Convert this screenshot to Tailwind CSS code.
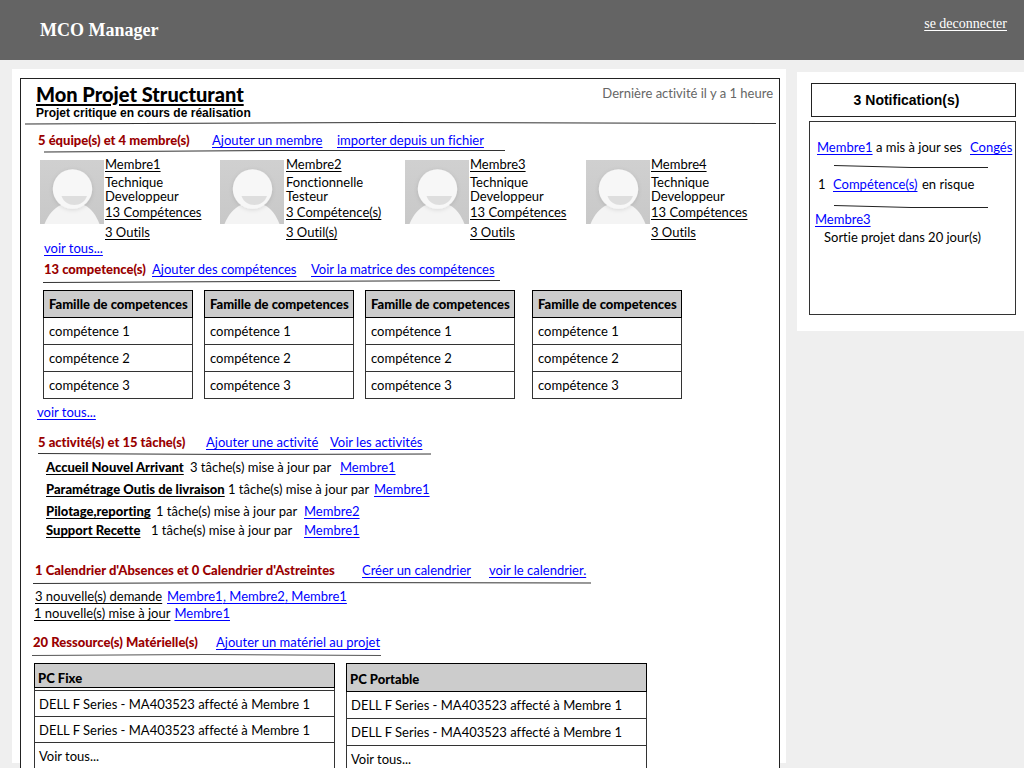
<!DOCTYPE html>
<html lang="fr">
<head>
<meta charset="utf-8">
<meta name="viewport" content="width=device-width, initial-scale=1">
<title>MCO Manager</title>
<script src="https://cdn.jsdelivr.net/npm/@tailwindcss/browser@4"></script>
</head>
<body class="flex h-screen flex-col overflow-hidden bg-[#efefef] font-['Comic_Sans_MS',Lato,sans-serif] text-[13px] leading-[18px] text-black [font-variant-ligatures:none] [&_a]:whitespace-nowrap [&_a]:underline [&_a]:underline-offset-2 [&_svg]:block">
<svg width="0" height="0" class="absolute" aria-hidden="true">
  <defs>
    <linearGradient id="bg" x1="0" y1="0" x2="0" y2="1"><stop offset="0" stop-color="#d0d0d0"/><stop offset="1" stop-color="#c8c8c8"/></linearGradient>
    <filter id="sh" x="-20%" y="-20%" width="140%" height="140%"><feDropShadow dx="0" dy="1" stdDeviation="2" flood-color="#000" flood-opacity=".12"/></filter>
    <symbol id="avatar" viewBox="0 0 64 64">
      <rect width="64" height="64" fill="url(#bg)"/>
      <path d="M4.500 64C8 55 14 48 21 45C28 43 37 43 44 45C51 48 56 55 59.500 64Z" fill="#f4f4f4"/>
      <circle cx="32.500" cy="29" r="19.700" fill="#f7f7f7" filter="url(#sh)"/>
      <path d="M21.500 36H47C43 48 25.500 48 21.500 36Z" fill="#dedede"/>
    </symbol>
  </defs>
</svg>
<header class="flex h-[60px] shrink-0 items-start justify-between bg-[#646464] pl-10 pr-[17px] font-['Liberation_Serif',serif] text-white">
  <h1 class="pt-[18px] text-[18px] font-bold leading-6">MCO Manager</h1>
  <a href="#" class="pt-[14px] text-[14px] leading-[20px]">se deconnecter</a>
</header>
<div class="flex min-h-0 flex-1 items-start gap-[11px] pl-3">
  <main class="mt-[9px] h-[calc(100vh-74px)] min-w-0 flex-1 bg-white pl-2 pr-[6px] pt-[9px]">
    <div class="min-h-[calc(100vh-70px)] border border-[#222] bg-white">
      <div class="flex h-[42px] justify-between pl-[15px] pr-[6px]">
        <div>
          <h2 class="pt-[3px] text-[20px] font-black leading-6"><a href="#">Mon Projet Structurant</a></h2>
          <p class="font-['Liberation_Sans',sans-serif] text-xs font-bold leading-[14px]">Projet critique en cours de réalisation</p>
        </div>
        <p class="pt-[5px] text-[#666]">Dernière activité il y a 1 heure</p>
      </div>
      <svg class="ml-1 h-1 w-[calc(100%-7px)]" viewBox="0 0 750 4" preserveAspectRatio="none"><path d="M0 3L360 1.500L750 2.500" fill="none" stroke="#333"/></svg>

      <section>
        <div class="flex pl-[17px] pt-[6px]">
          <h3 class="w-[174px] font-black text-[#900]">5 équipe(s) et 4 membre(s)</h3>
          <a href="#" class="w-[125px] text-[#00f]">Ajouter un membre</a>
          <a href="#" class="text-[#00f]">importer depuis un fichier</a>
        </div>
        <svg class="ml-[23px] h-1 w-[461px]" viewBox="0 0 461 4" preserveAspectRatio="none"><path d="M0 3L230 1.500L461 1.500" fill="none" stroke="#333"/></svg>
        <div class="flex pl-[19px] pt-[2px]">
          <article class="flex w-[180px]">
            <svg class="mt-[5px] size-16 shrink-0" role="img" aria-label="Membre1"><use href="#avatar"/></svg>
            <div class="flex flex-col items-start pl-px"><a href="#">Membre1</a><p class="pt-[2px] leading-[14px]">Technique<br>Developpeur</p><a href="#">13 Compétences</a><a href="#" class="pt-[3px] leading-4">3 Outils</a></div>
          </article>
          <article class="flex w-[185px]">
            <svg class="mt-[5px] size-16 shrink-0" role="img" aria-label="Membre2"><use href="#avatar"/></svg>
            <div class="flex flex-col items-start pl-[2px]"><a href="#">Membre2</a><p class="pt-[2px] leading-[14px]">Fonctionnelle<br>Testeur</p><a href="#">3 Compétence(s)</a><a href="#" class="pt-[3px] leading-4">3 Outil(s)</a></div>
          </article>
          <article class="flex w-[181px]">
            <svg class="mt-[5px] size-16 shrink-0" role="img" aria-label="Membre3"><use href="#avatar"/></svg>
            <div class="flex flex-col items-start pl-px"><a href="#">Membre3</a><p class="pt-[2px] leading-[14px]">Technique<br>Developpeur</p><a href="#">13 Compétences</a><a href="#" class="pt-[3px] leading-4">3 Outils</a></div>
          </article>
          <article class="flex">
            <svg class="mt-[5px] size-16 shrink-0" role="img" aria-label="Membre4"><use href="#avatar"/></svg>
            <div class="flex flex-col items-start pl-px"><a href="#">Membre4</a><p class="pt-[2px] leading-[14px]">Technique<br>Developpeur</p><a href="#">13 Compétences</a><a href="#" class="pt-[3px] leading-4">3 Outils</a></div>
          </article>
        </div>
        <p class="pl-[23px] leading-4"><a href="#" class="text-[#00f]">voir tous...</a></p>
      </section>

      <section>
        <div class="flex pl-[23px] pt-1">
          <h3 class="w-[108px] font-black text-[#900]">13 competence(s)</h3>
          <a href="#" class="w-[159px] text-[#00f]">Ajouter des compétences</a>
          <a href="#" class="text-[#00f]">Voir la matrice des compétences</a>
        </div>
        <svg class="ml-[22px] h-[6px] w-[457px]" viewBox="0 0 457 6" preserveAspectRatio="none"><path d="M0 4.500L220 3.500L457 2.500" fill="none" stroke="#333"/></svg>
        <div class="flex gap-[11px] pl-[22px] pt-[6px] [&_table]:w-[150px] [&_td]:h-[27px] [&_td]:border [&_td]:border-[#333] [&_td]:px-[5px] [&_th]:h-[27px] [&_th]:whitespace-nowrap [&_th]:border [&_th]:border-black [&_th]:bg-[#ccc] [&_th]:pl-[5px] [&_th]:text-left [&_th]:font-black">
          <table><thead><tr><th>Famille de competences</th></tr></thead><tbody><tr><td>compétence 1</td></tr><tr><td>compétence 2</td></tr><tr><td>compétence 3</td></tr></tbody></table>
          <table><thead><tr><th>Famille de competences</th></tr></thead><tbody><tr><td>compétence 1</td></tr><tr><td>compétence 2</td></tr><tr><td>compétence 3</td></tr></tbody></table>
          <table><thead><tr><th>Famille de competences</th></tr></thead><tbody><tr><td>compétence 1</td></tr><tr><td>compétence 2</td></tr><tr><td>compétence 3</td></tr></tbody></table>
          <table class="ml-[6px]"><thead><tr><th>Famille de competences</th></tr></thead><tbody><tr><td>compétence 1</td></tr><tr><td>compétence 2</td></tr><tr><td>compétence 3</td></tr></tbody></table>
        </div>
        <p class="pl-4 pt-1"><a href="#" class="text-[#00f]">voir tous...</a></p>
      </section>

      <section>
        <div class="flex pl-[17px] pt-3">
          <h3 class="w-[168px] font-black text-[#900]">5 activité(s) et 15 tâche(s)</h3>
          <a href="#" class="w-[124px] text-[#00f]">Ajouter une activité</a>
          <a href="#" class="text-[#00f]">Voir les activités</a>
        </div>
        <svg class="ml-[17px] h-[6px] w-[393px]" viewBox="0 0 393 6" preserveAspectRatio="none"><path d="M0 2.500L200 3.500L393 3" fill="none" stroke="#333"/></svg>
        <ul class="pl-[25px] pt-px [&_li]:flex">
          <li class="pb-1"><a href="#" class="w-[144px] font-black">Accueil Nouvel Arrivant</a><span class="w-[150px]">3 tâche(s) mise à jour par</span><a href="#" class="text-[#00f]">Membre1</a></li>
          <li class="pb-1"><a href="#" class="w-[182px] font-black">Paramétrage Outis de livraison</a><span class="w-[146px]">1 tâche(s) mise à jour par</span><a href="#" class="text-[#00f]">Membre1</a></li>
          <li class="pb-px"><a href="#" class="w-[110px] font-black">Pilotage,reporting</a><span class="w-[148px]">1 tâche(s) mise à jour par</span><a href="#" class="text-[#00f]">Membre2</a></li>
          <li><a href="#" class="w-[105px] font-black">Support Recette</a><span class="w-[153px]">1 tâche(s) mise à jour par</span><a href="#" class="text-[#00f]">Membre1</a></li>
        </ul>
      </section>

      <section>
        <div class="flex pl-[14px] pt-[22px]">
          <h3 class="w-[327px] font-black text-[#900]">1 Calendrier d'Absences et 0 Calendrier d'Astreintes</h3>
          <a href="#" class="w-[127px] text-[#00f]">Créer un calendrier</a>
          <a href="#" class="text-[#00f]">voir le calendrier.</a>
        </div>
        <svg class="ml-3 h-[6px] w-[558px]" viewBox="0 0 558 6" preserveAspectRatio="none"><path d="M0 4.500L260 3.500L558 4" fill="none" stroke="#333"/></svg>
        <div class="flex pl-[14px] pt-[2px]"><a href="#" class="w-[132px]">3 nouvelle(s) demande</a><a href="#" class="w-[56px] text-[#00f]">Membre1</a><a href="#" class="w-[62px] text-[#00f]">, Membre2</a><a href="#" class="text-[#00f]">, Membre1</a></div>
        <div class="flex gap-1 pl-[13px] leading-4"><a href="#">1 nouvelle(s) mise à jour</a><a href="#" class="text-[#00f]">Membre1</a></div>
      </section>

      <section>
        <div class="flex pl-3 pt-3">
          <h3 class="w-[183px] font-black text-[#900]">20 Ressource(s) Matérielle(s)</h3>
          <a href="#" class="text-[#00f]">Ajouter un matériel au projet</a>
        </div>
        <svg class="ml-[11px] h-[6px] w-[349px]" viewBox="0 0 349 6" preserveAspectRatio="none"><path d="M0 4.500L170 3.500L349 4.500" fill="none" stroke="#555"/></svg>
        <div class="flex items-start gap-[11px] pl-[13px] pt-[6px] [&_table]:w-[301px] [&_td]:border [&_td]:border-[#333] [&_td]:px-1 [&_th]:border [&_th]:border-black [&_th]:bg-[#ccc] [&_th]:px-[3px] [&_th]:text-left [&_th]:font-black">
          <table><thead><tr><th class="h-[24px] pt-1">PC Fixe</th></tr><tr><td class="h-[3px]"></td></tr></thead><tbody class="[&_td]:h-[26px]"><tr><td>DELL F Series - MA403523 affecté à Membre 1</td></tr><tr><td>DELL F Series - MA403523 affecté à Membre 1</td></tr><tr><td>Voir tous...</td></tr></tbody></table>
          <table><thead><tr><th class="h-[28px] pt-[2px]">PC Portable</th></tr></thead><tbody class="[&_td]:h-[27px]"><tr><td>DELL F Series - MA403523 affecté à Membre 1</td></tr><tr><td>DELL F Series - MA403523 affecté à Membre 1</td></tr><tr><td>Voir tous...</td></tr></tbody></table>
        </div>
      </section>
    </div>
  </main>

  <aside class="mt-3 w-[227px] shrink-0 bg-white pb-4 pl-3 pr-2 pt-[11px]">
    <h2 class="ml-[2px] border border-[#222] py-2 pr-[14px] text-center font-['Liberation_Sans',sans-serif] text-sm font-bold leading-4">3 Notification(s)</h2>
    <div class="mt-1 min-h-[194px] border border-[#333] pt-4">
      <p class="flex pl-[7px]"><a href="#" class="w-[59px] text-[#00f]">Membre1</a><span class="w-[94px] whitespace-nowrap">a mis à jour ses</span><a href="#" class="text-[#00f]">Congés</a></p>
      <svg class="ml-6 mt-[9px] h-1 w-[154px]" viewBox="0 0 154 4" preserveAspectRatio="none"><path d="M0 .5L77 2.500L154 2.500" fill="none" stroke="#222"/></svg>
      <p class="flex pl-2 pt-[6px]"><span class="w-[15px]">1</span><a href="#" class="w-[89px] text-[#00f]">Compétence(s)</a><span>en risque</span></p>
      <svg class="ml-6 mt-3 h-1 w-[154px]" viewBox="0 0 154 4" preserveAspectRatio="none"><path d="M0 .5L77 2.500L154 2.500" fill="none" stroke="#222"/></svg>
      <p class="pl-[5px] pt-px"><a href="#" class="text-[#00f]">Membre3</a></p>
      <p class="pl-[14px]">Sortie projet dans 20 jour(s)</p>
    </div>
  </aside>
</div>
</body>
</html>
